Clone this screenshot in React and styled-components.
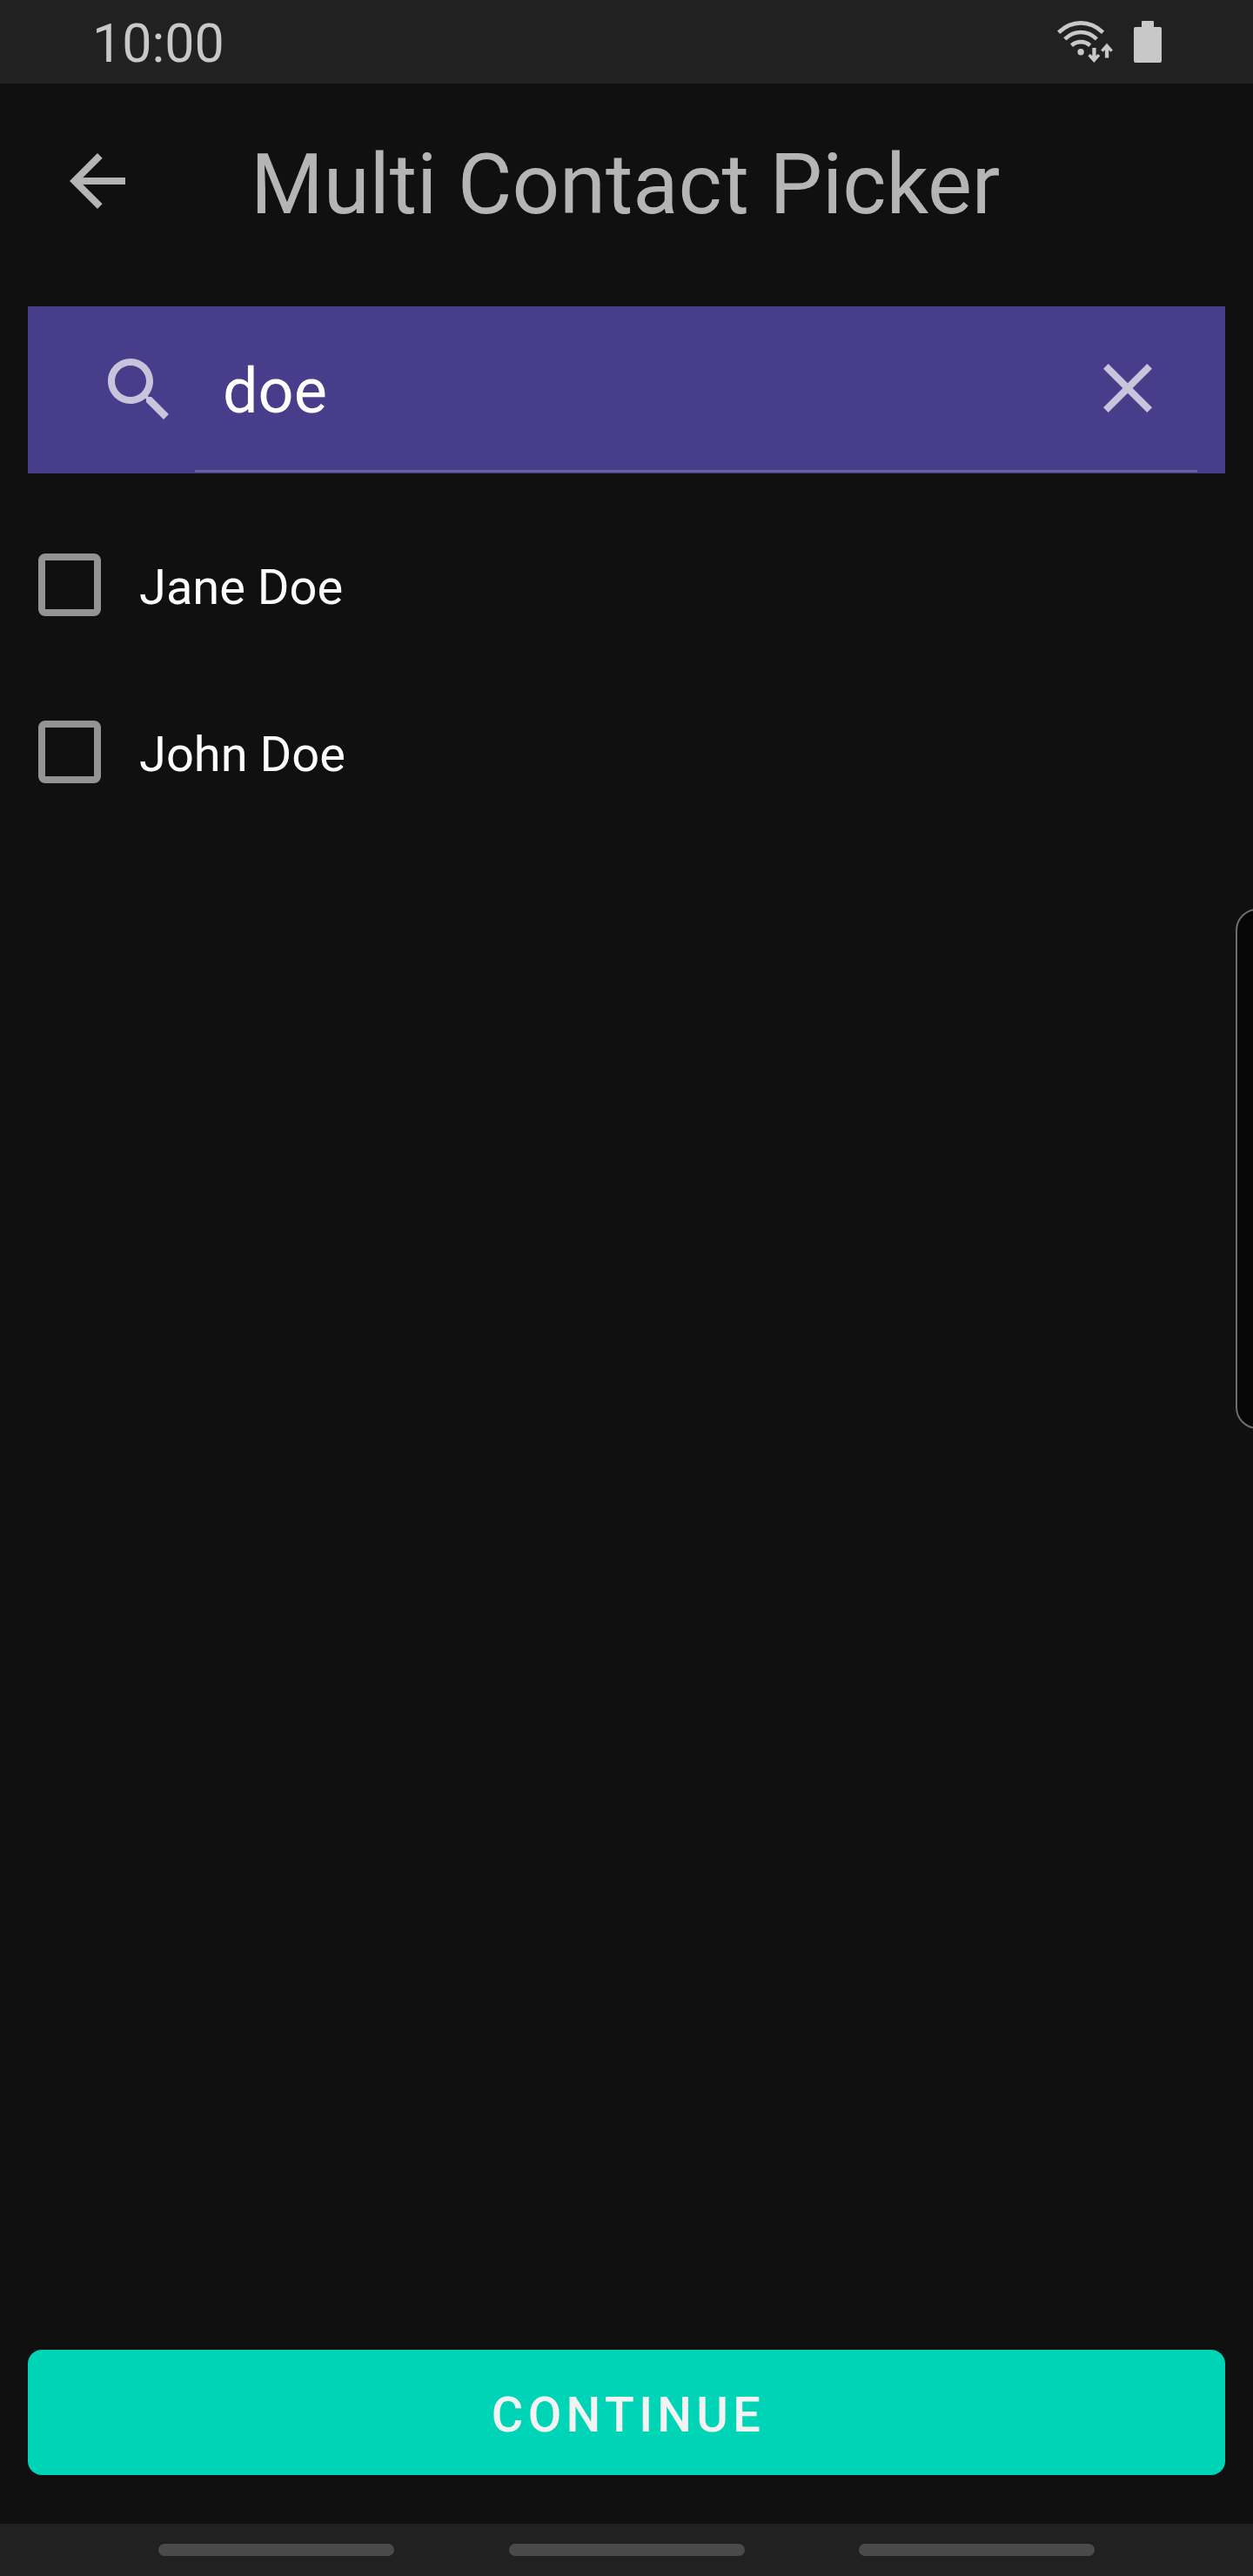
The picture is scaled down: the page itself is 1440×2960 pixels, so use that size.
import React from "react";
import styled, { createGlobalStyle } from "styled-components";

const GlobalStyle = createGlobalStyle`
  * { box-sizing: border-box; }
  body { margin: 0; background: #101010; }
`;

const Screen = styled.div`
  position: relative;
  display: flex;
  flex-direction: column;
  width: 1440px;
  height: 2960px;
  overflow: hidden;
  background: #101010;
  color: #fff;
  font-family: Roboto, sans-serif;
`;

const StatusBar = styled.header`
  display: flex;
  flex: none;
  align-items: center;
  height: 96px;
  padding: 0 105px 0 106px;
  background: #212121;
  color: #c8c8c8;
`;

const Clock = styled.span`
  flex: 1;
  padding-top: 3px;
  font-size: 61px;
  line-height: 72px;
`;

const StatusIcons = styled.div`
  display: flex;
  align-items: center;
  gap: 24px;
`;

const Icon = styled.svg`
  display: block;
  flex: none;
  width: ${(p) => p.$w || 96}px;
  height: ${(p) => p.$h || 96}px;
  fill: currentColor;
`;

const AppBar = styled.div`
  display: flex;
  flex: none;
  align-items: center;
  height: 224px;
  padding-left: 64px;
  gap: 128px;
  color: #b5b5b5;
`;

const Title = styled.h1`
  margin: 0;
  padding-top: 7px;
  font-size: 96px;
  font-weight: 400;
  line-height: 112px;
  letter-spacing: -0.1px;
`;

const SearchBar = styled.div`
  display: flex;
  flex: none;
  align-items: center;
  height: 192px;
  margin: 32px 32px 0;
  padding: 0 32px 0 80px;
  gap: 16px;
  background: #483d8b;
  color: #c9c4dc;
`;

const SearchField = styled.div`
  display: flex;
  flex: 1;
  align-items: center;
  height: 192px;
  padding: 0 32px 4px;
  background: linear-gradient(#6d64a2 0 2px, #5f5599 2px 3px, transparent 3px) 0 188px / 100% 4px no-repeat;
`;

const Query = styled.span`
  flex: 1;
  padding-top: 7px;
  color: #fff;
  font-size: 72px;
  line-height: 84px;
`;

const ContactList = styled.ul`
  flex: 1;
  margin: 0;
  padding: 32px 44px;
  list-style: none;
`;

const Contact = styled.li`
  display: flex;
  align-items: center;
  height: 192px;
  gap: 44px;
`;

const Checkbox = styled.span`
  width: 72px;
  height: 72px;
  border: 8px solid #949494;
  border-radius: 8px;
`;

const Name = styled.span`
  padding-top: 6px;
  font-size: 56px;
  line-height: 66px;
`;

const ContinueButton = styled.button`
  flex: none;
  height: 144px;
  margin: 0 32px 56px;
  padding: 6px 0 0 4px;
  border: 0;
  border-radius: 16px;
  background: #00d4b6;
  color: #f3f3f3;
  font: 500 56px/66px Roboto, sans-serif;
  letter-spacing: 5.28px;
`;

const NavBar = styled.nav`
  display: flex;
  flex: none;
  justify-content: center;
  align-items: center;
  height: 60px;
  gap: 131.5px;
  background: #212121;
`;

const NavHint = styled.span`
  width: 271px;
  height: 14px;
  border-radius: 7px;
  background: #4a4a4a;
`;

const EdgeHandle = styled.div`
  position: absolute;
  top: 1044px;
  right: -14px;
  width: 34px;
  height: 598px;
  border: 2px solid #6e6e6e;
  border-radius: 25px 0 0 25px;
  background: #060606;
`;

const contacts = ["Jane Doe", "John Doe"];

export default function App() {
  return (
    <Screen>
      <GlobalStyle />
      <StatusBar>
        <Clock>10:00</Clock>
        <StatusIcons>
          <Icon $w={64} $h={48} viewBox="0 0 64 48">
            <path
              d="M1.6 13.2C17.1-1.2 37.1-1.2 52.6 13.2M8.8 20.8C19.800 10.400 34.400 10.400 45.400 20.800M16.500 28.200C22.600 22.800 31.600 22.800 37.700 28.200"
              fill="none"
              stroke="currentColor"
              strokeWidth="4.6"
            />
            <circle cx="27.1" cy="35.7" r="3.7" />
            <path d="M40.3 31h4.300v9.100l2.400-2.200 2.200 2.400-6.900 7.700-6.900-7.700 2.200-2.400 2.700 2.200z" />
            <path d="M57 25.700l6.900 7.700-2.200 2.300-2.500-2.300v9h-4.300v-9l-2.500 2.300-2.200-2.300z" />
          </Icon>
          <Icon $w={32} $h={48} viewBox="0 0 32 48">
            <path d="M9 1q0-1 1-1h12q1 0 1 1v6h7q2 0 2 2v37q0 2-2 2H2q-2 0-2-2V9q0-2 2-2h7z" />
          </Icon>
        </StatusIcons>
      </StatusBar>
      <AppBar>
        <Icon viewBox="0 0 24 24">
          <path d="M20 11H7.83l5.59-5.59L12 4l-8 8 8 8 1.41-1.41L7.83 13H20v-2z" />
        </Icon>
        <Title>Multi Contact Picker</Title>
      </AppBar>
      <SearchBar>
        <Icon viewBox="0 0 24 24">
          <path d="M15.5 14h-.79l-.28-.27C15.41 12.59 16 11.11 16 9.5 16 5.91 13.09 3 9.5 3S3 5.91 3 9.5 5.91 16 9.5 16c1.61 0 3.09-.59 4.23-1.57l.27.28v.79l5 4.99L20.49 19l-4.99-5zm-6 0C7.01 14 5 11.99 5 9.5S7.01 5 9.5 5 14 7.01 14 9.5 11.99 14 9.5 14z" />
        </Icon>
        <SearchField>
          <Query>doe</Query>
          <Icon viewBox="0 0 24 24">
            <path d="M19 6.41L17.59 5 12 10.59 6.41 5 5 6.41 10.59 12 5 17.59 6.41 19 12 13.41 17.59 19 19 17.59 13.41 12z" />
          </Icon>
        </SearchField>
      </SearchBar>
      <ContactList>
        {contacts.map((name) => (
          <Contact key={name}>
            <Checkbox role="checkbox" aria-checked="false" />
            <Name>{name}</Name>
          </Contact>
        ))}
      </ContactList>
      <ContinueButton>CONTINUE</ContinueButton>
      <NavBar>
        <NavHint />
        <NavHint />
        <NavHint />
      </NavBar>
      <EdgeHandle />
    </Screen>
  );
}
